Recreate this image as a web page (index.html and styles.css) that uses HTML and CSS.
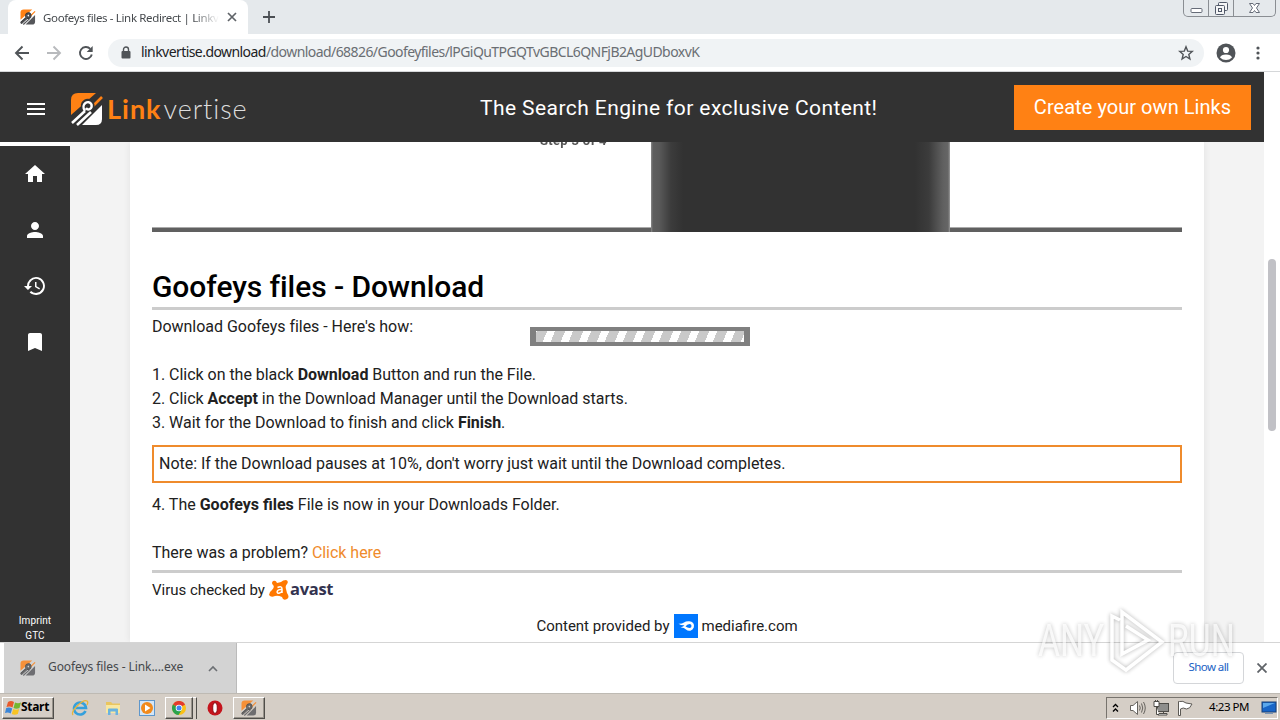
FILE: index.html
```html
<!DOCTYPE html>
<html lang="en">

<head>
    <meta charset="UTF-8">
    <meta name="viewport" content="width=device-width, initial-scale=1.0">
    <title>Goofeys files - Link Redirect | Linkvertise</title>
    <link rel="stylesheet" href="styles.css">
</head>

<body>
    <svg width="0" height="0" class="defs">
        <symbol id="mark" viewBox="0 0 34 34">
            <path fill="#ff8114" d="M1 8Q1 1 8 1H26L1 23Z" />
            <path fill="none" stroke="#ff8114" stroke-width="2.6" d="M20 17L32 5" />
            <path fill="currentColor" d="M32 13V27Q32 33 26 33H12Z" />
            <path fill="none" stroke="#323232" stroke-width="5" d="M2 30L15 18C9 11 20 5 22 13C23 18 18 20 15 18" />
            <path fill="none" stroke="currentColor" stroke-width="2.600" d="M2 31L15 19M7 33L21 20" />
            <path fill="none" stroke="currentColor" stroke-width="2.400" d="M15 19C10 12 19 7 21.500 12.500C22.500 17 18 19 16 16" />
        </symbol>
    </svg>
    <div class="tabs">
        <div class="tab">
            <svg class="favicon" width="16" height="16"><use href="#mark" /></svg>
            <span class="tab-title">Goofeys files - Link Redirect | Linkve</span>
            <svg width="10" height="10" viewBox="0 0 10 10"><path d="M1 1L9 9M9 1L1 9" stroke="#5f6368" stroke-width="1.7" /></svg>
        </div>
        <svg class="plus" width="12" height="12" viewBox="0 0 12 12"><path d="M6 0V12M0 6H12" stroke="#4b4f54" stroke-width="1.8" /></svg>
        <div class="winbtns">
            <span><svg width="13" height="17" viewBox="0 0 13 17"><rect x="1" y="8.500" width="11" height="4" rx="1" fill="#fff" stroke="#666c78" /></svg></span>
            <span><svg width="14" height="17" viewBox="0 0 14 17" fill="#f4f5f6" stroke="#505868"><rect x="4.500" y="2.500" width="9" height="8" rx="1" /><rect x="1.500" y="5.500" width="9" height="9" rx="1" /><rect x="4.500" y="8.500" width="3" height="3" /></svg></span>
            <span class="wide"><svg width="13" height="17" viewBox="0 0 13 17"><path d="M1.500 3.500H5L6.500 5.500L8 3.500H11.500L8.500 8L11.500 12.500H8L6.500 10.500L5 12.500H1.500L4.500 8Z" fill="#fff" stroke="#666c78" /></svg></span>
        </div>
    </div>
    <div class="toolbar">
        <svg width="16" height="16" viewBox="0 0 16 16" fill="none" stroke="#505458" stroke-width="1.9"><path d="M15 8H2M8.500 1.500L2 8L8.500 14.500" /></svg>
        <svg width="16" height="16" viewBox="0 0 16 16" fill="none" stroke="#b8babd" stroke-width="1.9"><path d="M1 8H14M7.500 1.500L14 8L7.500 14.500" /></svg>
        <svg width="16" height="16" viewBox="0 0 16 16" fill="none" stroke="#505458" stroke-width="1.9"><path d="M13.800 9.500A6 6 0 1 1 12.300 3.800" /><path d="M14.700 1V7H8.700Z" fill="#505458" stroke="none" /></svg>
        <div class="address">
            <svg width="10" height="13" viewBox="0 0 10 13"><rect x="0.500" y="5" width="9" height="7.500" rx="1" fill="#505458" /><path d="M2.500 5.500V3.500A2.500 2.500 0 0 1 7.500 3.500V5.500" fill="none" stroke="#505458" stroke-width="1.400" /></svg>
            <span class="url"><b>linkvertise.download</b><i>/download/68826/Goofeyfiles/lPGiQuTPGQTvGBCL6QNFjB2AgUDboxvK</i></span>
            <svg class="star" width="16" height="16" viewBox="0 0 16 16"><path d="M8 1.800L9.700 6.100L14.300 6.400L10.800 9.400L11.900 14L8 11.500L4.100 14L5.200 9.400L1.700 6.400L6.300 6.100Z" fill="none" stroke="#505458" stroke-width="1.400" /></svg>
        </div>
        <svg class="avatar" width="20" height="20" viewBox="0 0 20 20"><circle cx="10" cy="10" r="9.500" fill="#505458" /><circle cx="10" cy="7" r="3.100" fill="#fff" /><path d="M4 14.500Q5 11.500 10 11.500T16 14.500Q13.500 17 10 17T4 14.500Z" fill="#fff" /></svg>
        <svg width="4" height="14" viewBox="0 0 4 14" fill="#505458"><circle cx="2" cy="2" r="1.600" /><circle cx="2" cy="7" r="1.600" /><circle cx="2" cy="12" r="1.600" /></svg>
    </div>

    <div class="viewport">
        <div class="site">
            <div class="header">
                <svg class="burger" width="18" height="12" viewBox="0 0 18 12"><path d="M0 1H18M0 6H18M0 11H18" stroke="#fff" stroke-width="2" /></svg>
                <svg class="logo" width="34" height="34"><use href="#mark" /></svg>
                <div class="brand"><b>Link</b><span>vertise</span></div>
                <div class="slogan">The Search Engine for exclusive Content!</div>
                <div class="create">Create your own Links</div>
            </div>
            <div class="main">
                <div class="sidebar">
                    <svg width="24" height="24" viewBox="0 0 24 24"><path d="M10 20v-6h4v6h5v-8h3L12 3 2 12h3v8z" /></svg>
                    <svg width="24" height="24" viewBox="0 0 24 24"><path d="M12 12c2.200 0 4-1.800 4-4s-1.800-4-4-4-4 1.800-4 4 1.800 4 4 4zm0 2c-2.700 0-8 1.300-8 4v2h16v-2c0-2.700-5.300-4-8-4z" /></svg>
                    <svg width="24" height="24" viewBox="0 0 24 24"><path d="M13 3a9 9 0 0 0-9 9H1l3.900 3.900.1.100L9 12H6a7 7 0 1 1 2.100 4.900l-1.500 1.500A9 9 0 1 0 13 3zm-1 5v5l4.300 2.500.7-1.200-3.500-2.100V8z" /></svg>
                    <svg width="24" height="24" viewBox="0 0 24 24"><path d="M17 3H7c-1.100 0-2 .9-2 2v16l7-3 7 3V5c0-1.100-.9-2-2-2z" /></svg>
                    <div class="legal">Imprint<br>GTC</div>
                </div>
                <div class="content">
                    <div class="card">
                        <div class="shot">
                            <div class="step"><span>Step 3 of 4</span></div>
                            <div class="dark"></div>
                            <div class="blank"></div>
                        </div>
                        <h1>Goofeys files - Download</h1>
                        <p class="intro">Download Goofeys files - Here's how:</p>
                        <p>1. Click on the black <b>Download</b> Button and run the File.</p>
                        <p>2. Click <b>Accept</b> in the Download Manager until the Download starts.</p>
                        <p>3. Wait for the Download to finish and click <b>Finish</b>.</p>
                        <p class="note">Note: If the Download pauses at 10%, don't worry just wait until the Download completes.</p>
                        <p class="last">4. The <b>Goofeys files</b> File is now in your Downloads Folder.</p>
                        <p class="problem">There was a problem? <a>Click here</a></p>
                        <div class="virus">Virus checked by
                            <svg width="20" height="20" viewBox="0 0 20 20"><path fill="#ff7800" d="M4 1Q7 0 8 3L12 2Q14 0 17 0Q20 1 18 4Q16 6 17 9L18 13Q21 17 18 19Q14 21 13 17Q9 15 6 16Q2 18 0 15Q0 12 3 10Q6 7 4 5Q2 3 4 1Z" /><path d="M8.500 7.500Q13 5.500 13 9V13M13 9.500C7 9 7 14 10.500 13Q12.500 12.500 13 11" fill="none" stroke="#fff" stroke-width="1.500" /></svg>
                            <b>avast</b>
                        </div>
                        <div class="provider">Content provided by
                            <svg width="24" height="24" viewBox="0 0 24 24"><rect width="24" height="24" fill="#0077ff" /><path d="M4.500 9.800Q8 10 10 8.500Q12 7 15 7.200A4.800 4.800 0 1 1 12 15.500Q10 13.300 6.500 13.500Q9.500 12.700 10.500 11.300Q7 11.500 4.500 9.800Z" fill="#fff" /><path d="M11.500 12.600Q13 10 15.500 10A2 2 0 1 1 15.500 14Q13.500 14 11.500 12.600Z" fill="#0077ff" /></svg>
                            <span>mediafire.com</span>
                        </div>
                    </div>
                </div>
            </div>
        </div>
        <div class="scrollbar"><div class="thumb"></div></div>
    </div>

    <div class="downloads">
        <div class="file">
            <svg class="muted" width="16" height="16"><use href="#mark" /></svg>
            <span>Goofeys files - Link....exe</span>
            <svg width="10" height="7" viewBox="0 0 10 7"><path d="M1 6L5 2L9 6" fill="none" stroke="#6c6f73" stroke-width="1.600" /></svg>
        </div>
        <div class="showall">Show all</div>
        <svg width="10" height="10" viewBox="0 0 10 10"><path d="M0.500 0.500L9.500 9.500M9.500 0.500L0.500 9.500" stroke="#5f6368" stroke-width="1.800" /></svg>
    </div>

    <div class="taskbar">
        <div class="start raised">
            <svg width="17" height="16" viewBox="0 0 17 16"><path fill="#e8592a" d="M3 2Q6 0 9 2L7.500 7.500Q5 6 1.500 7Z" /><path fill="#74b62e" d="M10 2.500Q13 4 16 2.500L14.500 8Q11.500 9.500 8.500 8Z" /><path fill="#3b86d8" d="M1.200 8Q4.500 7 7.200 8.500L5.700 13.500Q3 12 0 13Z" /><path fill="#f8c423" d="M8.200 9Q11 10.500 14.200 9L12.800 14Q9.500 15.500 6.800 14Z" /></svg>
            <b>Start</b>
        </div>
        <svg class="ie" width="18" height="18" viewBox="0 0 18 18"><path d="M14.500 12A6 6 0 1 1 15 9H5" fill="none" stroke="#35a0dc" stroke-width="2.600" /><path d="M2 16C-1 12 12 0 16 2Q17.500 3 16 6" fill="none" stroke="#e8b53a" stroke-width="1.300" /></svg>
        <svg class="folder" width="16" height="16" viewBox="0 0 16 16"><path d="M1 2H6L7.500 3.500H15V13H1Z" fill="#e9c55f" /><path d="M1 5H15V13H1Z" fill="#f8e7a0" /><path d="M3 15V9.500Q3 8.500 4 8.500H12Q13 8.500 13 9.500V15H10.500V11.500H5.500V15Z" fill="#69b3df" /></svg>
        <svg class="media" width="16" height="16" viewBox="0 0 16 16"><rect x=".5" y=".5" width="15" height="15" fill="#d4e6f7" stroke="#5e97cc" /><circle cx="8" cy="8" r="6" fill="#f28a1b" /><path d="M6 4.500L11.500 8L6 11.500Z" fill="#fff" /></svg>
        <div class="chrome raised">
            <svg width="14" height="14" viewBox="0 0 14 14"><circle cx="7" cy="7" r="7" fill="#fbc116" /><path d="M7 7L.9 3.500A7 7 0 0 1 13.100 3.500Z" fill="#e33b2e" /><path d="M7 7L.9 3.500A7 7 0 0 0 6.500 14L10 8.500Z" fill="#2ba24c" /><circle cx="7" cy="7" r="3.300" fill="#fff" /><circle cx="7" cy="7" r="2.500" fill="#4285f4" /></svg>
        </div>
        <div class="stack"></div>
        <svg class="opera" width="16" height="16" viewBox="0 0 16 16"><circle cx="8" cy="8" r="7.500" fill="#c5141c" /><ellipse cx="8" cy="8" rx="2.300" ry="5.300" fill="#fff" stroke="#8e0c13" /></svg>
        <div class="app raised"><svg class="muted" width="16" height="16"><use href="#mark" /></svg></div>
        <div class="tray">
            <svg width="7" height="10" viewBox="0 0 7 10"><path d="M1 4L3.500 1.500L6 4M1 8.500L3.500 6L6 8.500" fill="none" stroke="#000" stroke-width="1.300" /></svg>
            <svg class="sound" width="17" height="16" viewBox="0 0 17 16" stroke="#66635e"><path d="M1.500 5.500H4L8.500 1.500V14.500L4 10.500H1.500Z" fill="#fff" /><path d="M10.500 5.500Q12 8 10.500 10.500M12.500 3.500Q15 8 12.500 12.500M14.500 2Q18 8 14.500 14" fill="none" /></svg>
            <svg class="net" width="16" height="16" viewBox="0 0 16 16" stroke="#4e4c48"><rect x="4.500" y="3.500" width="11" height="8" fill="#8e8e8c" /><path d="M5 13.500H14V15H5ZM10.500 12V14" fill="#fff" /><path d="M1 1.500H6V6.500H1ZM2.500 0V2M4.500 0V2M3.500 6V14.500H6" fill="#fff" /></svg>
            <svg class="flag" width="16" height="16" viewBox="0 0 16 16" stroke="#5c5954" fill="#fff"><path d="M2.500 1.500Q6 .5 9 3L15 4Q13 9 9.500 9Q6 7 3.500 9V15.500H1.500V1.500Z" /></svg>
            <span class="clock">4:23 PM</span>
            <svg width="16" height="14" viewBox="0 0 16 14"><rect x="1" y="1" width="14" height="10" fill="#1865c7" stroke="#174078" /><path d="M2 2H14L2 7Z" fill="#5ba8ec" /><path d="M4 12.500H12" stroke="#7894b4" /></svg>
        </div>
    </div>

    <div class="progress"><div></div></div>
    <div class="watermark">
        <span>ANY</span>
        <svg width="60" height="66" viewBox="0 0 60 66"><path d="M14 12L6 8V52L20 62L56 34L16 4V46L42 32L20 18" fill="none" stroke="#fff" stroke-width="3.500" /></svg>
        <span>RUN</span>
    </div>
</body>

</html>
```
FILE: styles.css
```css
* {
    margin: 0;
    padding: 0;
    box-sizing: border-box;
}

body {
    width: 1280px;
    height: 720px;
    overflow: hidden;
    position: relative;
    display: flex;
    flex-direction: column;
    background-color: #fff;
    font-family: Roboto, sans-serif;
    color: #212121;
}

svg {
    display: block;
    flex-shrink: 0;
}

.defs {
    position: absolute;
}

/* browser */
.tabs,
.toolbar,
.downloads,
.taskbar {
    font-family: "Noto Sans", sans-serif;
    display: flex;
    align-items: center;
    flex-shrink: 0;
}

.tabs {
    height: 34px;
    background-color: #e5e9ec;
    padding-left: 8px;
}

.tab {
    width: 240px;
    height: 34px;
    border-radius: 8px 8px 0 0;
    background-color: #fff;
    display: flex;
    align-items: center;
    padding-left: 12px;
}

.favicon,
.muted {
    color: #55565a;
}

.muted {
    opacity: 0.8;
}

.tab-title {
    width: 176px;
    margin: 0 8px 0 7px;
    font-size: 11.5px;
    letter-spacing: -0.35px;
    white-space: nowrap;
    color: #45494d;
    -webkit-mask-image: linear-gradient(to right, #000 150px, transparent 176px);
    mask-image: linear-gradient(to right, #000 150px, transparent 176px);
}

.plus {
    margin-left: 15px;
}

.winbtns {
    margin: 0 4px 0 auto;
    align-self: flex-start;
    display: flex;
    height: 17px;
    border: 1px solid #8a8e93;
    border-top: none;
    border-radius: 0 0 5px 5px;
}

.winbtns span {
    width: 25px;
    display: flex;
    justify-content: center;
    border-right: 1px solid #8a8e93;
}

.winbtns .wide {
    width: 41px;
    border-right: none;
}

.toolbar {
    height: 38px;
    border-bottom: 1px solid #d5d7d9;
    padding-left: 14px;
    gap: 16px;
}

.address {
    width: 1096px;
    height: 28px;
    margin-left: -2px;
    border-radius: 14px;
    background-color: #f0f3f5;
    display: flex;
    align-items: center;
    padding: 0 10px 0 13px;
}

.url {
    margin: -2px 0 0 10px;
    font-size: 14px;
    letter-spacing: -0.565px;
    white-space: nowrap;
}

.url b {
    font-weight: 400;
    color: #202124;
}

.url i {
    font-style: normal;
    color: #6a6e73;
}

.star {
    margin-left: auto;
}

.avatar {
    margin: 0 4px 0 -4px;
}

/* site */
.viewport {
    height: 570px;
    flex-shrink: 0;
    display: flex;
}

.site {
    width: 1264px;
    display: flex;
    flex-direction: column;
}

.header {
    height: 70px;
    flex-shrink: 0;
    display: flex;
    align-items: center;
    background-color: #323232;
    color: #fff;
    padding: 0 13px 0 27px;
}

.burger {
    margin-top: 4px;
}

.logo {
    margin: 4px 0 0 25px;
}

.brand {
    width: 142px;
    margin: 3px 0 0 3px;
    font-family: Lato, sans-serif;
    font-size: 27px;
    white-space: nowrap;
}

.brand b {
    color: #ff8114;
    font-weight: 700;
    letter-spacing: 1px;
}

.brand span {
    margin-left: 2px;
    color: #ddd;
    font-weight: 300;
    letter-spacing: 0.9px;
}

.slogan {
    margin: 1px 0 0 231px;
    font-size: 21px;
    letter-spacing: 0.42px;
    white-space: nowrap;
}

.create {
    width: 237px;
    height: 45px;
    margin-left: auto;
    background-color: #ff8114;
    font-size: 20px;
    letter-spacing: 0.05px;
    line-height: 45px;
    text-align: center;
}

.main {
    height: 500px;
    display: flex;
}

.sidebar {
    width: 70px;
    border-top: 4px solid #fff;
    background-color: #323232;
    background-clip: padding-box;
    display: flex;
    flex-direction: column;
    align-items: center;
    gap: 32px;
    padding-top: 16px;
    fill: #fff;
}

.legal {
    margin: auto 0 -1px;
    color: #fff;
    font-size: 10px;
    letter-spacing: 0.1px;
    line-height: 15px;
    text-align: center;
}

.content {
    width: 1194px;
    height: 500px;
    overflow: hidden;
    background-color: #f3f3f3;
    padding: 0 60px;
}

.card {
    height: 500px;
    background-color: #fff;
    box-shadow: 0 0 7px rgba(0, 0, 0, 0.08);
    padding: 0 22px;
    font-size: 16px;
    letter-spacing: -0.03px;
    line-height: 24px;
}

.shot {
    height: 90px;
    display: grid;
    grid-template-columns: 499px 299px 1fr;
    background-color: #606060;
}

.step,
.blank {
    height: 86px;
    background-color: #fff;
    border-bottom: 1px solid #aaa;
}

.step {
    padding-left: 388px;
}

.step span {
    display: block;
    margin-top: -10px;
    font-size: 13px;
    font-weight: 700;
    letter-spacing: 0.3px;
    line-height: 18px;
    color: #555;
    filter: blur(0.6px);
    clip-path: inset(10px 0 0 0);
}

.dark {
    background: linear-gradient(to right, #8a8a8a, #5e5e5e 2px, #5a5a5a 8px, #3c3c3c 20px, #323232 32px, #323232 264px, #3c3c3c 278px, #606060 292px, #666 297px, #999);
}

h1 {
    height: 78px;
    padding-top: 36px;
    border-bottom: 3px solid #ccc;
    font-size: 30px;
    font-weight: 500;
    letter-spacing: -0.08px;
    line-height: 38px;
    color: #000;
}

.intro {
    margin: 5px 0 24px;
}

.note {
    height: 38px;
    margin: 10px 0;
    border: 2px solid #ef8b2c;
    padding-left: 5px;
    line-height: 34px;
}

.last {
    letter-spacing: 0;
}

.problem {
    height: 32px;
    margin-top: 24px;
    border-bottom: 3px solid #ccc;
}

.problem a {
    color: #ef8b2c;
}

.virus,
.provider {
    display: flex;
    align-items: center;
    font-size: 15px;
    letter-spacing: 0;
}

.virus {
    margin-top: 5px;
    gap: 4px;
}

.virus b {
    margin: -2px 0 0 -3px;
    font-family: "Open Sans", sans-serif;
    font-size: 16.5px;
    letter-spacing: -0.3px;
    color: #33334f;
}

.provider {
    margin-top: 12px;
    justify-content: center;
    gap: 4px;
}

.scrollbar {
    width: 16px;
    padding: 187px 4px 0;
}

.thumb {
    height: 172px;
    border-radius: 4px;
    background-color: #c1c1c6;
}

/* download bar */
.downloads {
    height: 51px;
    border-top: 1px solid #d5d5d5;
    padding: 0 13px 0 4px;
}

.file {
    width: 233px;
    height: 50px;
    background-color: #d3d3d3;
    border-right: 1px solid #bbb;
    display: flex;
    align-items: center;
    padding-left: 16px;
    font-size: 12px;
    color: #45484b;
}

.file span {
    width: 148px;
    margin: -3px 12px 0;
    letter-spacing: -0.08px;
    white-space: nowrap;
}

.showall {
    width: 71px;
    height: 32px;
    margin: 0 13px 0 auto;
    border: 1px solid #d4d6d9;
    border-radius: 4px;
    font-size: 11.5px;
    letter-spacing: -0.6px;
    line-height: 28px;
    text-align: center;
    color: #1b62c4;
}

/* taskbar */
.taskbar {
    height: 27px;
    border-top: 1px solid #bebab3;
    background-color: #d5cec6;
    padding: 1px 2px 0;
}

.raised {
    height: 22px;
    border: 1px solid;
    border-color: #fff #504e4a #504e4a #fff;
    box-shadow: inset -1px -1px #98938b;
    display: flex;
    align-items: center;
    justify-content: center;
}

.start {
    width: 52px;
    font-size: 12px;
    color: #000;
}

.start b {
    margin: -2px 2px 0 -1px;
    letter-spacing: -0.3px;
}

.ie {
    margin-left: 17px;
}

.folder {
    margin-left: 16px;
}

.media {
    margin-left: 18px;
}

.chrome {
    width: 28px;
    margin-left: 10px;
}

.stack {
    width: 4px;
    height: 22px;
    border-right: 1px solid #504e4a;
    border-top: 1px solid #fff;
}

.opera {
    margin-left: 10px;
}

.app {
    width: 32px;
    margin-left: 10px;
}

.tray {
    width: 172px;
    height: 22px;
    margin-left: auto;
    border: 1px solid;
    border-color: #77736d #fff #fff #77736d;
    display: flex;
    align-items: center;
    padding-left: 5px;
}

.sound {
    margin-left: 10px;
}

.net {
    margin-left: 7px;
}

.flag {
    margin-left: 8px;
}

.clock {
    width: 42px;
    margin: -2px 10px 0 16px;
    font-size: 11.5px;
    letter-spacing: -0.45px;
    white-space: nowrap;
    color: #000;
}

/* overlays */
.progress {
    position: absolute;
    left: 530px;
    top: 327px;
    width: 220px;
    height: 19px;
    background-color: #808080;
    padding: 4px 6px;
}

.progress div {
    height: 11px;
    background: repeating-linear-gradient(112deg, #fff 0 1px, #c9c9c9 1px 10.3px, #fff 10.3px 16.7px);
}

.watermark {
    position: absolute;
    left: 1038px;
    top: 608px;
    display: flex;
    align-items: center;
    color: rgba(255, 255, 255, 0.8);
    filter: drop-shadow(0 0 2px rgba(0, 0, 0, 0.4));
    opacity: 0.75;
}

.watermark span {
    width: 66px;
    font-size: 45px;
    line-height: 66px;
    transform: scaleX(0.75);
    transform-origin: left;
    white-space: nowrap;
}

.watermark svg {
    margin: 0 2px;
}
```
